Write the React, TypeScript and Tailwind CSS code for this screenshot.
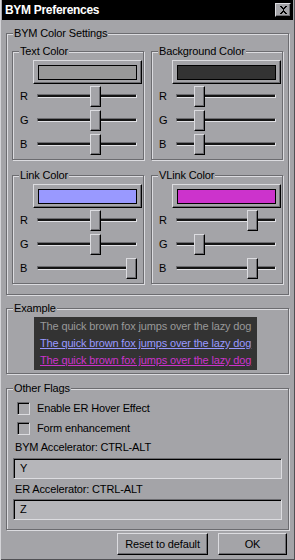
import type { ReactNode } from 'react'

const raised =
  'border border-t-[#dcdce0] border-l-[#dcdce0] border-b-black border-r-black shadow-[inset_-1px_-1px_0_#6c6c70]'
const sunken =
  'border border-t-[#6c6c70] border-l-[#6c6c70] border-b-[#dcdce0] border-r-[#dcdce0] shadow-[inset_1px_1px_0_#000]'

function Group({ label, className = '', children }: { label: string; className?: string; children: ReactNode }) {
  return (
    <fieldset
      className={`border border-[#6c6c70] shadow-[inset_1px_1px_0_#dcdce0,1px_1px_0_#dcdce0] ${className}`}
    >
      <legend className="ml-[6px] bg-[#a4a4a8] px-[1px] leading-[13px]">{label}</legend>
      {children}
    </fieldset>
  )
}

function Slider({ value }: { value: number }) {
  return (
    <div className="relative flex h-[24px] w-[100px] items-center">
      <div className="h-[4px] w-full border border-t-[#6c6c70] border-l-[#6c6c70] border-b-[#e0e0e4] border-r-[#e0e0e4] bg-[#141414]" />
      <div
        className={`absolute top-[2px] h-[21px] w-[11px] bg-[#a4a4a8] ${raised}`}
        style={{ left: Math.round((value / 255) * 89) }}
      />
    </div>
  )
}

function ColorGroup({ label, color, rgb }: { label: string; color: string; rgb: number[] }) {
  return (
    <Group label={label}>
      <div className="pt-[2px] pb-[3px]">
        <div className={`ml-[20px] flex h-[24px] w-[109px] items-center justify-center bg-[#a4a4a8] ${raised}`}>
          <div className={`h-[15px] w-[99px] border border-black ${color}`} />
        </div>
        <div className="pl-[7px]">
          {['R', 'G', 'B'].map((c, i) => (
            <div key={c} className="flex h-[24px] items-center">
              <span className="w-[17px]">{c}</span>
              <Slider value={rgb[i]} />
            </div>
          ))}
        </div>
      </div>
    </Group>
  )
}

function Checkbox({ label }: { label: string }) {
  return (
    <div className="flex h-[20px] items-center gap-[7px] pl-[10px]">
      <div className={`h-[13px] w-[13px] bg-[#a8a8ac] ${sunken}`} />
      <span>{label}</span>
    </div>
  )
}

function Field({ value, className = '' }: { value: string; className?: string }) {
  return (
    <div className={`ml-[6px] flex h-[21px] w-[269px] items-center bg-[#b6b6ba] pl-[6px] ${sunken} ${className}`}>
      {value}
    </div>
  )
}

export default function App() {
  return (
    <div className="flex h-[560px] w-[295px] flex-col bg-[#a4a4a8] font-['Liberation_Sans',Arial,sans-serif] text-[11px] tracking-[-0.15px] text-black shadow-[inset_1px_0_0_#d4d4d8,inset_-1px_0_0_#505054,inset_0_-1px_0_#505054]">
      <div className="mx-[2px] flex h-[20px] items-center justify-between bg-black pr-[2px] pl-[3px]">
        <span className="text-[12px] font-bold tracking-[-0.3px] text-white">BYM Preferences</span>
        <div className={`flex h-[14px] w-[16px] items-center justify-center bg-[#a4a4a8] ${raised}`}>
          <svg width="9" height="8" viewBox="0 0 9 8" shapeRendering="crispEdges">
            <path d="M1 0h2v1h1v1h1V1h1V0h2v1H7v1H6v1H5v2h1v1h1v1h1v1H6V7H5V6H4v1H3v1H1V7h1V6h1V5h1V3H3V2H2V1H1z" fill="#000" />
          </svg>
        </div>
      </div>

      <Group label="BYM Color Settings" className="mt-[7px] ml-[6px] w-[283px]">
        <div className="grid grid-cols-[132px_132px] gap-x-[7px] gap-y-[9px] pt-[5px] pb-[10px] pl-[5px]">
          <ColorGroup label="Text Color" color="bg-[#999999]" rgb={[153, 153, 153]} />
          <ColorGroup label="Background Color" color="bg-[#333333]" rgb={[51, 51, 51]} />
          <ColorGroup label="Link Color" color="bg-[#9999ff]" rgb={[153, 153, 255]} />
          <ColorGroup label="VLink Color" color="bg-[#cc33cc]" rgb={[204, 51, 204]} />
        </div>
      </Group>

      <Group label="Example" className="mt-[7px] ml-[6px] w-[283px]">
        <div className="pt-[2px] pb-[3px]">
          <div className="ml-[27px] w-fit bg-[#333333] px-[6px] py-[1px] leading-[17px]">
            <div className="text-[#999999]">The quick brown fox jumps over the lazy dog</div>
            <div className="text-[#9999ff] underline">The quick brown fox jumps over the lazy dog</div>
            <div className="text-[#cc33cc] underline">The quick brown fox jumps over the lazy dog</div>
          </div>
        </div>
      </Group>

      <Group label="Other Flags" className="mt-[8px] ml-[6px] w-[283px]">
        <div className="pt-[3px] pb-[9px]">
          <Checkbox label="Enable ER Hover Effect" />
          <Checkbox label="Form enhancement" />
          <div className="flex h-[18px] items-center pl-[8px]">BYM Accelerator: CTRL-ALT</div>
          <Field value="Y" className="mt-[2px]" />
          <div className="mt-[1px] flex h-[18px] items-center pl-[8px]">ER Accelerator: CTRL-ALT</div>
          <Field value="Z" className="mt-[1px]" />
        </div>
      </Group>

      <div className="mt-[3px] flex justify-end gap-[10px] pr-[8px]">
        <button className={`flex h-[22px] w-[91px] items-center justify-center bg-[#a4a4a8] ${raised}`}>
          Reset to default
        </button>
        <button className={`flex h-[22px] w-[69px] items-center justify-center bg-[#a4a4a8] ${raised}`}>
          OK
        </button>
      </div>
    </div>
  )
}
